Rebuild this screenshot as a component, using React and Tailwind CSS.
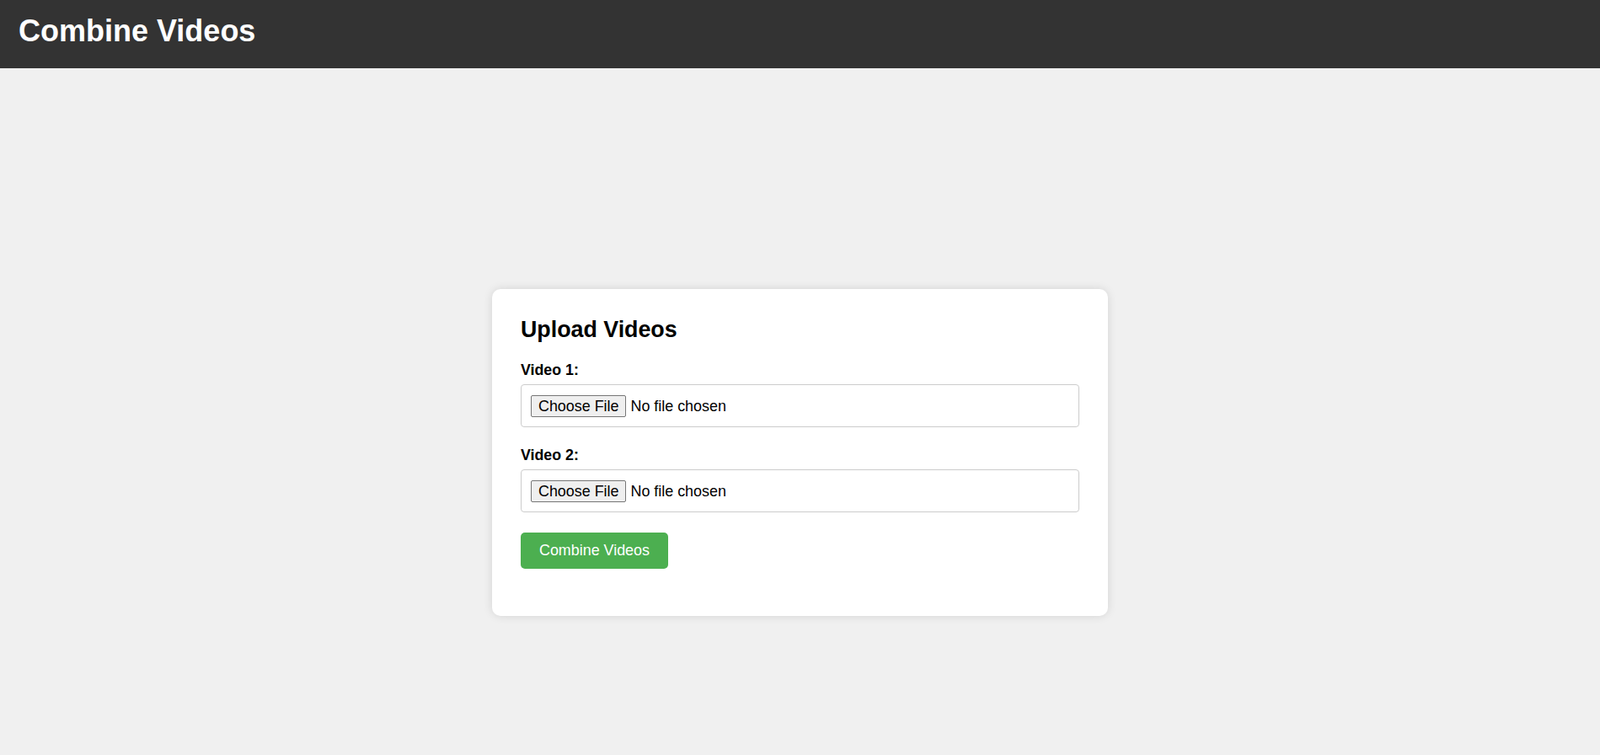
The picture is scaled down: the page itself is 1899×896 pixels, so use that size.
import React from "react";

const App = () => {
  return (
    <div
      className="min-h-screen bg-[#f0f0f0] text-black"
      style={{ fontFamily: '"Liberation Sans", Arial, sans-serif' }}
    >
      {/* header */}
      <header className="h-[81px] bg-[#333333] px-[22px] pt-[17px]">
        <h1 className="text-[36px] font-bold text-white leading-[40px]">
          Combine Videos
        </h1>
      </header>

      {/* upload card */}
      <main className="flex justify-center pt-[262px]">
        <div className="w-[731px] bg-white rounded-[10px] shadow-[0_0_11px_rgba(0,0,0,0.12)] px-[34px] pt-[33px] pb-[56px]">
          <h2 className="text-[26.8px] font-bold leading-[30px] mb-[23px]">
            Upload Videos
          </h2>

          <label className="block text-[17.8px] font-bold leading-[20px] mb-[7px]">
            Video 1:
          </label>
          <input
            type="file"
            accept="video/*"
            className="block w-full h-[51px] px-[11px] py-[12px] mb-[23px] border border-[#cccccc] rounded-[4px] text-[17.9px] leading-[20px] file:mr-[5px] file:px-[8px] file:py-[2px] file:border file:border-[#767676] file:bg-[#efefef] file:rounded-[2px] file:text-black"
          />

          <label className="block text-[17.8px] font-bold leading-[20px] mb-[7px]">
            Video 2:
          </label>
          <input
            type="file"
            accept="video/*"
            className="block w-full h-[51px] px-[11px] py-[12px] mb-[24px] border border-[#cccccc] rounded-[4px] text-[17.9px] leading-[20px] file:mr-[5px] file:px-[8px] file:py-[2px] file:border file:border-[#767676] file:bg-[#efefef] file:rounded-[2px] file:text-black"
          />

          <button
            type="button"
            className="h-[43px] px-[22px] bg-[#4caf50] text-white text-[17.9px] rounded-[5px]"
          >
            Combine Videos
          </button>
        </div>
      </main>
    </div>
  );
};

export default App;
